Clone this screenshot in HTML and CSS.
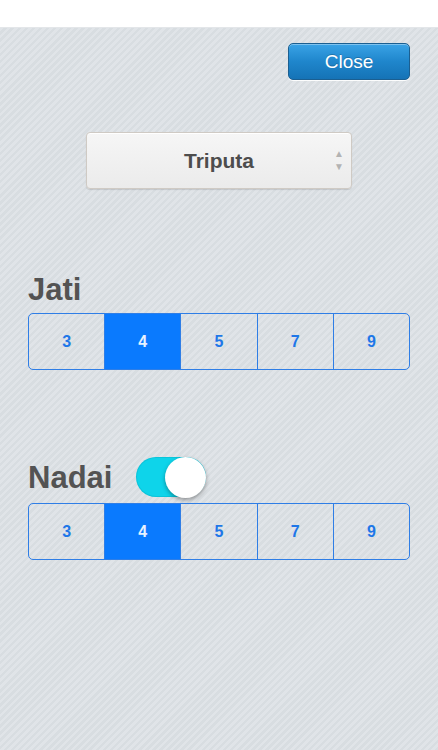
FILE: index.html
```html
<!DOCTYPE html>
<html>
<head>
<meta charset="utf-8">
<link rel="stylesheet" href="styles.css">
</head>
<body>
<div class="topbar"></div>
<main class="panel">
  <div class="close-row">
    <button class="close-btn">Close</button>
  </div>
  <div class="select-row">
    <div class="select">
      <span class="select-text">Triputa</span>
      <span class="arrows"><span class="up">▲</span><span class="down">▼</span></span>
    </div>
  </div>
  <section class="group jati">
    <h2 class="label">Jati</h2>
    <div class="seg">
      <div class="seg-item">3</div>
      <div class="seg-item active">4</div>
      <div class="seg-item">5</div>
      <div class="seg-item">7</div>
      <div class="seg-item">9</div>
    </div>
  </section>
  <section class="group nadai">
    <div class="label-row">
      <h2 class="label">Nadai</h2>
      <div class="toggle"><div class="knob"></div></div>
    </div>
    <div class="seg">
      <div class="seg-item">3</div>
      <div class="seg-item active">4</div>
      <div class="seg-item">5</div>
      <div class="seg-item">7</div>
      <div class="seg-item">9</div>
    </div>
  </section>
</main>
</body>
</html>
```
FILE: styles.css
```css
html, body {
  margin: 0;
  padding: 0;
}
body {
  width: 438px;
  height: 750px;
  overflow: hidden;
  font-family: "Liberation Sans", Arial, sans-serif;
  background: #dde1e5;
}
.topbar {
  height: 28px;
  background: #ffffff;
  border-bottom: 1px solid #e3e6e9;
  box-sizing: border-box;
}
.panel {
  height: 722px;
  background-color: #dce1e5;
  background-image: repeating-linear-gradient(-45deg, #d8dde1 0px, #d8dde1 2.5px, #e0e4e8 2.5px, #e0e4e8 5px);
  padding: 0 28px;
  box-sizing: border-box;
  display: flex;
  flex-direction: column;
}
.close-row {
  display: flex;
  justify-content: flex-end;
  padding-top: 15px;
}
.close-btn {
  width: 122px;
  height: 37px;
  border: 1px solid #1b5f91;
  border-radius: 5px;
  background: linear-gradient(#3aa3e6, #1f86cc 50%, #1573b6);
  color: #ffffff;
  font-family: "Liberation Sans", Arial, sans-serif;
  font-size: 19px;
  padding: 0;
  box-shadow: 0 1px 0 rgba(255,255,255,0.9), inset 0 1px 0 rgba(255,255,255,0.35);
  text-shadow: 0 -1px 0 rgba(0,0,0,0.2);
}
.select-row {
  display: flex;
  padding-left: 58px;
  margin-top: 52px;
}
.select {
  width: 266px;
  height: 57px;
  box-sizing: border-box;
  border: 1px solid #cfcac4;
  border-radius: 4px;
  background: linear-gradient(#f6f6f6, #ebebeb);
  box-shadow: 0 1px 1px rgba(0,0,0,0.12), inset 0 1px 0 #ffffff;
  display: flex;
  align-items: center;
  justify-content: center;
  position: relative;
}
.select-text {
  font-size: 21px;
  font-weight: bold;
  color: #4d4d4d;
}
.arrows {
  position: absolute;
  right: 7px;
  top: 14px;
  display: flex;
  flex-direction: column;
  color: #b3b3b3;
  font-size: 10px;
  line-height: 13px;
}
.group.jati {
  margin-top: 84px;
}
.label {
  margin: 0;
  font-size: 31px;
  font-weight: bold;
  color: #535353;
  line-height: 34px;
}
.jati .label {
  margin-bottom: 6px;
}
.seg {
  display: flex;
  height: 57px;
  border: 1px solid #2f7ee6;
  border-radius: 5px;
  overflow: hidden;
  box-sizing: border-box;
}
.seg-item {
  flex: 1;
  display: flex;
  align-items: center;
  justify-content: center;
  color: #1e77e8;
  font-size: 16px;
  font-weight: bold;
  border-left: 1px solid #2f7ee6;
}
.seg-item:first-child {
  border-left: none;
}
.seg-item.active {
  background: #0a7afe;
  color: #e8f1ff;
}
.group.nadai {
  margin-top: 87px;
}
.label-row {
  display: flex;
  align-items: center;
  gap: 24px;
  height: 40px;
  margin-bottom: 6px;
}
.nadai .label {
  padding-top: 2px;
}
.toggle {
  width: 70px;
  height: 40px;
  border-radius: 20px;
  background: #0ed4ea;
  position: relative;
  box-shadow: inset 0 0 0 1px rgba(0,150,170,0.25);
}
.knob {
  position: absolute;
  right: 0;
  top: 0;
  width: 41px;
  height: 41px;
  border-radius: 50%;
  background: #ffffff;
  box-shadow: 0 2px 4px rgba(0,0,0,0.35);
}
```
